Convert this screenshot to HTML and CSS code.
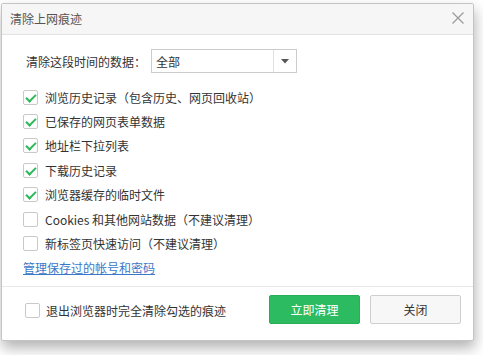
FILE: index.html
```html
<!DOCTYPE html>
<html lang="zh-CN">
<head>
    <meta charset="UTF-8">
    <title>清除上网痕迹</title>
    <link rel="stylesheet" href="styles.css">
</head>
<body>
    <div class="dialog">
        <div class="title-bar">
            <span class="title">清除上网痕迹</span>
            <svg class="close-x" width="12" height="12" viewBox="0 0 12 12">
                <path d="M0.5 0.5 L11.5 11.5 M11.5 0.5 L0.5 11.5" stroke="#9a9a9a" stroke-width="1.2" fill="none"/>
            </svg>
        </div>

        <div class="content">
            <div class="range-row">
                <span class="range-label">清除这段时间的数据：</span>
                <div class="select">
                    <span class="select-value">全部</span>
                    <span class="select-arrow">
                        <svg width="8" height="5" viewBox="0 0 8 5"><path d="M0 0 L8 0 L4 4.5 Z" fill="#555"/></svg>
                    </span>
                </div>
            </div>

            <ul class="options">
                <li><span class="box checked"></span>浏览历史记录（包含历史、网页回收站）</li>
                <li><span class="box checked"></span>已保存的网页表单数据</li>
                <li><span class="box checked"></span>地址栏下拉列表</li>
                <li><span class="box checked"></span>下载历史记录</li>
                <li><span class="box checked"></span>浏览器缓存的临时文件</li>
                <li><span class="box"></span>Cookies 和其他网站数据（不建议清理）</li>
                <li><span class="box"></span>新标签页快速访问（不建议清理）</li>
            </ul>

            <a class="manage-link" href="#">管理保存过的帐号和密码</a>
        </div>

        <div class="footer">
            <label class="exit-option"><span class="box"></span>退出浏览器时完全清除勾选的痕迹</label>
            <div class="buttons">
                <button class="btn btn-primary">立即清理</button>
                <button class="btn btn-default">关闭</button>
            </div>
        </div>
    </div>
</body>
</html>
```

FILE: styles.css
```css
* {
    margin: 0;
    padding: 0;
    box-sizing: border-box;
}

body {
    background-color: #ffffff;
    font-family: "Noto Sans CJK SC", "Noto Sans", sans-serif;
    font-size: 12px;
    color: #333333;
    width: 483px;
    height: 355px;
    overflow: hidden;
}

.dialog {
    margin: 3px 0 0 1px;
    width: 473px;
    height: 338px;
    border: 1px solid #c4c4c4;
    border-radius: 2px;
    background-color: #ffffff;
    box-shadow: 1px 7px 14px rgba(0, 0, 0, 0.3);
    display: flex;
    flex-direction: column;
}

.title-bar {
    height: 31px;
    background-color: #f6f6f6;
    border-bottom: 1px solid #e2e2e2;
    display: flex;
    align-items: center;
    justify-content: space-between;
    padding: 0 8px 2px 8px;
}

.title {
    color: #555555;
    font-size: 12px;
}

.close-x {
    margin-right: 1px;
}

.content {
    flex: 1;
    padding: 14px 0 0 21px;
}

.range-row {
    display: flex;
    align-items: center;
    height: 24px;
}

.range-label {
    margin-left: 3px;
    width: 125px;
}

.select {
    width: 146px;
    height: 24px;
    border: 1px solid #cccccc;
    display: flex;
    align-items: center;
    background-color: #ffffff;
}

.select-value {
    flex: 1;
    padding-left: 4px;
}

.select-arrow {
    width: 23px;
    height: 100%;
    border-left: 1px solid #e0e0e0;
    display: flex;
    align-items: center;
    justify-content: center;
}

.options {
    list-style: none;
    margin-top: 12px;
}

.options li {
    height: 24.4px;
    display: flex;
    align-items: center;
}

.box {
    width: 15px;
    height: 15px;
    border: 1px solid #c9c9c9;
    border-radius: 2px;
    background-color: #ffffff;
    margin-right: 7px;
    flex-shrink: 0;
    position: relative;
}

.box.checked::after {
    content: "";
    position: absolute;
    left: 4px;
    top: 1px;
    width: 4px;
    height: 8px;
    border-right: 2px solid #2eb85c;
    border-bottom: 2px solid #2eb85c;
    transform: rotate(45deg);
}

.manage-link {
    display: block;
    margin-top: 3px;
    color: #3b78c9;
    text-decoration: underline;
}

.footer {
    height: 54px;
    border-top: 1px solid #e8e8e8;
    display: flex;
    justify-content: space-between;
    padding: 8px 12px 0 23px;
}

.exit-option {
    display: flex;
    align-items: center;
    height: 30px;
}

.exit-option .box {
    margin-right: 6px;
}

.buttons {
    display: flex;
    gap: 10px;
}

.btn {
    width: 91px;
    height: 29px;
    font-family: inherit;
    font-size: 12px;
    border-radius: 2px;
    cursor: pointer;
}

.btn-primary {
    background-color: #2dbb62;
    border: 1px solid #28ad59;
    color: #ffffff;
}

.btn-default {
    background-color: #f7f7f7;
    border: 1px solid #cfcfcf;
    color: #333333;
}
```
